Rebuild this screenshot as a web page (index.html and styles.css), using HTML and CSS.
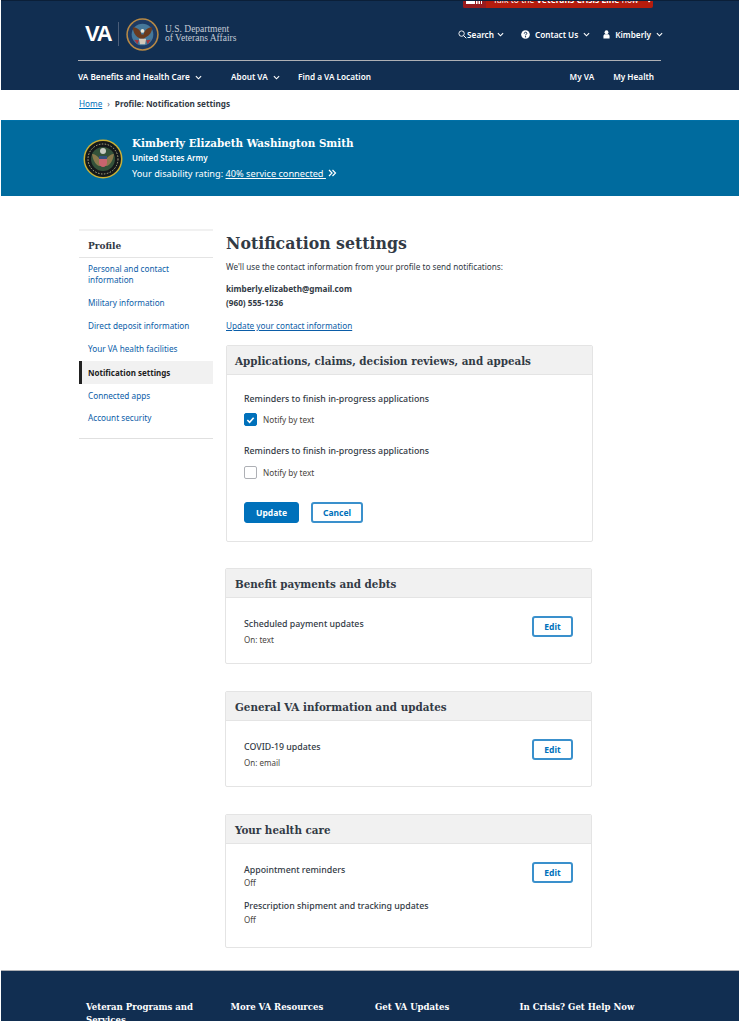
FILE: index.html
```html
<!DOCTYPE html>
<html lang="en">

<head>
    <meta charset="UTF-8">
    <meta name="viewport" content="width=device-width, initial-scale=1.0">
    <title>Notification settings</title>
    <link rel="stylesheet" href="styles.css">
</head>

<body>
    <header class="siteHeader">
        <div class="crisisBar">
            <div class="crisisIcon"><svg viewBox="0 0 16 4"><path d="M0 0h9v3H0zM10 0h1.500v3H10zM12.500 0H14v3h-1.500zM15 0h1v3h-1z" fill="#fff"/></svg></div>
            <div class="crisisText">Talk to the <b>Veterans Crisis Line</b> now
                <svg class="crisisArrow" viewBox="0 0 8 10"><path d="M2 1l4 4-4 4" fill="none" stroke="#fff" stroke-width="2"/></svg>
            </div>
        </div>
        <div class="topRow">
            <div class="logo">
                <span class="logoVa">VA</span>
                <span class="logoSep"></span>
                <svg class="seal" viewBox="0 0 32 32">
                    <circle cx="16" cy="16" r="15.700" fill="#b98a45"/>
                    <circle cx="16" cy="16" r="14.200" fill="#1d3a63"/>
                    <circle cx="16" cy="16" r="10.500" fill="#46789a"/>
                    <path d="M6.500 9c3 0 5.500 1 7.500 4l1 3h2l1-3c2-3 4.500-4 7.500-4-.5 5-2.500 8-6 9.500l-2.500 1.500h-3L11 18.500C9 17 7 14 6.500 9z" fill="#6a3a1e"/>
                    <circle cx="16" cy="12.500" r="1.800" fill="#ece6d6"/>
                    <path d="M12.500 20h7l-1 5.500h-5z" fill="#d3c8ba"/>
                    <path d="M8 21l4.500.5-1.500 4z" fill="#a8353a"/>
                    <path d="M24 21l-4.500.5 1.500 4z" fill="#a8353a"/>
                </svg>
                <span class="logoText">U.S. Department<br>of Veterans Affairs</span>
            </div>
            <nav class="utilNav">
                <a class="utilSearch">
                    <svg class="searchIcon" viewBox="0 0 10 10"><circle cx="4" cy="4" r="3" fill="none" stroke="#fff" stroke-width="1"/><path d="M6.200 6.200L9.200 9.200" stroke="#fff" stroke-width="1.100"/></svg>Search
                    <svg class="chev" viewBox="0 0 8 5"><path d="M1 1l3 3 3-3" fill="none" stroke="#fff" stroke-width="1.300"/></svg>
                </a>
                <a class="utilItem">
                    <svg class="helpIcon" viewBox="0 0 10 10"><circle cx="5" cy="5" r="4.800" fill="#fff"/><path d="M3.600 4c0-2 2.900-2 2.900-.3C6.500 4.800 5 4.700 5 6" fill="none" stroke="#112e51" stroke-width="1.100"/><circle cx="5" cy="7.500" r=".7" fill="#112e51"/></svg>
                    Contact Us
                    <svg class="chev" viewBox="0 0 8 5"><path d="M1 1l3 3 3-3" fill="none" stroke="#fff" stroke-width="1.300"/></svg>
                </a>
                <a class="utilItem">
                    <svg class="userIcon" viewBox="0 0 8 10"><circle cx="4" cy="2.400" r="2.200" fill="#fff"/><path d="M.5 9.500V7c0-1.500 1-2.200 2-2.200h3c1 0 2 .7 2 2.200v2.500z" fill="#fff"/></svg>
                    Kimberly
                    <svg class="chev" viewBox="0 0 8 5"><path d="M1 1l3 3 3-3" fill="none" stroke="#fff" stroke-width="1.300"/></svg>
                </a>
            </nav>
        </div>
        <nav class="mainNav">
            <a class="mainLink navBenefits">VA Benefits and Health Care
                <svg class="chev" viewBox="0 0 8 5"><path d="M1 1l3 3 3-3" fill="none" stroke="#fff" stroke-width="1.300"/></svg></a>
            <a class="mainLink navAbout">About VA
                <svg class="chev" viewBox="0 0 8 5"><path d="M1 1l3 3 3-3" fill="none" stroke="#fff" stroke-width="1.300"/></svg></a>
            <a class="mainLink">Find a VA Location</a>
            <span class="navSpace"></span>
            <a class="mainLink navMyVa">My VA</a>
            <a class="mainLink">My Health</a>
        </nav>
    </header>

    <div class="crumbs">
        <a class="crumbLink">Home</a>
        <span class="crumbSep">›</span>
        <b>Profile: Notification settings</b>
    </div>

    <section class="heroBar">
        <svg class="armySeal" viewBox="0 0 40 40">
            <circle cx="20" cy="20" r="19.500" fill="#c9b037"/>
            <circle cx="20" cy="20" r="18" fill="#14181a"/>
            <circle cx="20" cy="20" r="12" fill="#34523a"/>
            <circle cx="20" cy="20" r="15" fill="none" stroke="#b9b08a" stroke-width="1" stroke-dasharray="1.500 1.500"/>
            <circle cx="20" cy="12" r="3" fill="#c9ccc4"/>
            <path d="M9 15c3 0 5 2 7 4h8c2-2 4-4 7-4-1 6-3 10-7 12h-8c-4-2-6-6-7-12z" fill="#8a7a4d"/>
            <path d="M16 17h8v7c0 2-2 4-4 4s-4-2-4-4z" fill="#c9646e"/>
            <path d="M16 17h8v3h-8z" fill="#35507f"/>
        </svg>
        <div class="heroText">
            <h2 class="heroName">Kimberly Elizabeth Washington Smith</h2>
            <div class="heroBranch">United States Army</div>
            <div class="heroRating">Your disability rating: <a class="heroLink">40% service connected
                <svg class="dblChev" viewBox="0 0 9 8"><path d="M1 1l3 3-3 3M4.500 1l3 3-3 3" fill="none" stroke="#fff" stroke-width="1.200"/></svg></a></div>
        </div>
    </section>

    <main class="pageBody">
        <aside class="sideNav">
            <h4 class="sideTitle">Profile</h4>
            <ul class="sideList">
                <li><a>Personal and contact information</a></li>
                <li><a>Military information</a></li>
                <li><a>Direct deposit information</a></li>
                <li><a>Your VA health facilities</a></li>
                <li class="sideActive"><a>Notification settings</a></li>
                <li><a>Connected apps</a></li>
                <li><a>Account security</a></li>
            </ul>
        </aside>

        <div class="content">
            <h1 class="pageTitle">Notification settings</h1>
            <p class="intro">We'll use the contact information from your profile to send notifications:</p>
            <p class="contactInfo">kimberly.elizabeth@gmail.com<br>(960) 555-1236</p>
            <a class="updateLink">Update your contact information</a>

            <section class="card cardForm">
                <h3 class="cardHead">Applications, claims, decision reviews, and appeals</h3>
                <div class="cardBody">
                    <div class="rowTitle">Reminders to finish in-progress applications</div>
                    <label class="check">
                        <span class="box boxOn"><svg viewBox="0 0 10 8"><path d="M1.500 4l2.500 2.500 4.500-5" fill="none" stroke="#fff" stroke-width="1.800"/></svg></span>
                        Notify by text
                    </label>
                    <div class="rowTitle rowSecond">Reminders to finish in-progress applications</div>
                    <label class="check checkSecond">
                        <span class="box"></span>
                        Notify by text
                    </label>
                    <div class="btnRow">
                        <button class="btn btnMain">Update</button>
                        <button class="btn btnLine">Cancel</button>
                    </div>
                </div>
            </section>

            <section class="card">
                <h3 class="cardHead">Benefit payments and debts</h3>
                <div class="cardBody cardSplit">
                    <div class="rowGroup">
                        <div class="rowTitle">Scheduled payment updates</div>
                        <div class="rowValue">On: text</div>
                    </div>
                    <button class="btn btnLine btnEdit">Edit</button>
                </div>
            </section>

            <section class="card">
                <h3 class="cardHead">General VA information and updates</h3>
                <div class="cardBody cardSplit">
                    <div class="rowGroup">
                        <div class="rowTitle">COVID-19 updates</div>
                        <div class="rowValue">On: email</div>
                    </div>
                    <button class="btn btnLine btnEdit">Edit</button>
                </div>
            </section>

            <section class="card">
                <h3 class="cardHead">Your health care</h3>
                <div class="cardBody cardSplit cardTall">
                    <div class="rowGroup">
                        <div class="rowTitle">Appointment reminders</div>
                        <div class="rowValue rowTight">Off</div>
                        <div class="rowTitle rowNext">Prescription shipment and tracking updates</div>
                        <div class="rowValue rowEnd">Off</div>
                    </div>
                    <button class="btn btnLine btnEdit">Edit</button>
                </div>
            </section>
        </div>
    </main>

    <footer class="siteFooter">
        <h4 class="footCol">Veteran Programs and Services</h4>
        <h4 class="footCol">More VA Resources</h4>
        <h4 class="footCol">Get VA Updates</h4>
        <h4 class="footCol">In Crisis? Get Help Now</h4>
    </footer>
</body>

</html>
```

FILE: styles.css
```css
* {
    box-sizing: border-box;
}

html,
body {
    height: 1021px;
    overflow: hidden;
}

body {
    margin: 0;
    padding: 0 1px;
    background: #fff;
    color: #323a45;
    font-family: "Noto Sans", sans-serif;
    font-size: 8.2px;
}

a {
    color: inherit;
}

.siteHeader {
    position: relative;
    height: 90px;
    padding: 0 78px 0 77px;
    border-top: 1px solid #0b1f38;
    background: #112e51;
    color: #fff;
    font-weight: 600;
}

.crisisBar {
    position: absolute;
    top: 0;
    left: 462px;
    display: flex;
    width: 190px;
    height: 7px;
    overflow: hidden;
    border-radius: 0 0 2px 2px;
    background: #b51c0d;
}

.crisisIcon {
    width: 23px;
    padding: 0 3px;
    background: #981b1e;
}

.crisisIcon svg {
    display: block;
    width: 16px;
    height: 4px;
}

.crisisText {
    margin-top: -7px;
    padding-left: 7px;
    font-size: 8.500px;
    font-weight: 400;
    line-height: 12px;
    white-space: nowrap;
}

.crisisArrow {
    width: 6px;
    height: 8px;
    margin-left: 6px;
}

.topRow {
    display: flex;
    align-items: center;
    justify-content: space-between;
    height: 60px;
    padding: 7px 0 0 7px;
    border-bottom: 1px solid #aeb0b5;
}

.logo {
    display: flex;
    align-items: center;
}

.logoVa {
    width: 31px;
    font-family: "Liberation Sans", sans-serif;
    font-size: 22px;
    font-weight: 700;
    letter-spacing: -1.200px;
}

.logoSep {
    width: 1px;
    height: 24px;
    margin: 0 7px 0 2px;
    background: #4a5d78;
}

.seal {
    width: 33px;
    height: 33px;
    margin-right: 6px;
}

.logoText {
    color: #c5ccd6;
    font-family: "Liberation Serif", serif;
    font-size: 9.500px;
    font-weight: 400;
    line-height: 9px;
}

.utilNav {
    display: flex;
    align-items: center;
    margin-right: -2px;
}

.utilSearch,
.utilItem {
    display: flex;
    align-items: center;
    white-space: nowrap;
}

.utilSearch {
    margin-right: 17px;
}

.utilItem {
    margin-right: 13px;
}

.utilItem:last-child {
    margin-right: 0;
}

.searchIcon {
    width: 9px;
    height: 9px;
}

.helpIcon {
    width: 9px;
    height: 9px;
    margin-right: 5px;
}

.userIcon {
    width: 7px;
    height: 9px;
    margin-right: 5px;
}

.chev {
    width: 7px;
    height: 5px;
    margin-left: 3px;
}

.utilItem .chev {
    margin-left: 5px;
}

.mainNav {
    display: flex;
    align-items: center;
    height: 29px;
    margin-right: 7px;
    padding-top: 1px;
}

.mainLink {
    white-space: nowrap;
}

.navBenefits {
    width: 153px;
}

.navAbout {
    width: 67px;
}

.navSpace {
    flex: 1;
}

.navMyVa {
    margin-right: 19px;
}

.crumbs {
    display: flex;
    align-items: center;
    height: 30px;
    padding: 0 0 3px 78px;
    background: #fff;
}

.crumbLink {
    color: #0071bb;
    text-decoration: underline;
}

.crumbSep {
    margin: 0 5px;
    color: #5b616b;
}

.heroBar {
    display: flex;
    align-items: center;
    height: 76px;
    padding-left: 82px;
    border-top: 1px solid #0071a8;
    background: #006b9e;
    color: #fff;
}

.armySeal {
    width: 40px;
    height: 40px;
    margin-right: 9px;
}

.heroName {
    margin: 0;
    font-family: "DejaVu Serif", serif;
    font-size: 11.500px;
    font-stretch: condensed;
    font-weight: 700;
    line-height: 15px;
}

.heroBranch {
    font-size: 8px;
    font-weight: 600;
    line-height: 13px;
}

.heroRating {
    margin-top: 3px;
    font-size: 9.200px;
    line-height: 14px;
}

.heroLink {
    text-decoration: underline;
}

.dblChev {
    width: 9px;
    height: 8px;
    margin-left: 2px;
}

.pageBody {
    display: flex;
    height: 774px;
    padding: 33px 0 0 78px;
}

.sideNav {
    width: 134px;
    height: 210px;
    margin-right: 13px;
    border-top: 2px solid #f1f1f1;
    border-bottom: 1px solid #e0e0e0;
}

.sideTitle {
    margin: 0;
    height: 27px;
    padding-left: 9px;
    border-bottom: 1px solid #e4e4e4;
    font-family: "DejaVu Serif", serif;
    font-size: 10px;
    font-stretch: condensed;
    font-weight: 700;
    line-height: 30px;
}

.sideList {
    margin: 0;
    padding: 5px 0 0;
    list-style: none;
    color: #0b5da8;
    line-height: 11px;
}

.sideList li {
    padding: 0 9px 12px;
}

.sideList .sideActive {
    margin: -5px 0 6px;
    padding: 6px 9px 6px 6px;
    border-left: 3px solid #212121;
    background: #f1f1f1;
    color: #212121;
    font-size: 8px;
    font-weight: 700;
}

.sideList li:last-child {
    margin-top: -1px;
}

.content {
    width: 367px;
}

.pageTitle {
    margin: 1px 0 0;
    font-family: "DejaVu Serif", serif;
    font-size: 17.500px;
    font-stretch: condensed;
    font-weight: 700;
    line-height: 26px;
}

.intro {
    margin: 4px 0 0;
    line-height: 13px;
}

.contactInfo {
    margin: 9px 0 0;
    font-weight: 700;
    line-height: 14px;
}

.updateLink {
    display: block;
    margin-top: 9px;
    color: #0b5da8;
    line-height: 14px;
    text-decoration: underline;
}

.card {
    width: 367px;
    margin: 0 0 27px -1px;
    overflow: hidden;
    border: 1px solid #e4e4e4;
    border-radius: 2px;
}

.cardForm {
    margin: 12px 0 26px;
}

.cardHead {
    margin: 0;
    height: 29px;
    padding-left: 9px;
    border-bottom: 1px solid #e4e4e4;
    background: #f1f1f1;
    font-family: "DejaVu Serif", serif;
    font-size: 11.500px;
    font-stretch: condensed;
    font-weight: 700;
    line-height: 31px;
}

.cardBody {
    padding: 19px 18px 17px;
}

.cardForm .cardHead {
    padding-left: 8px;
}

.cardForm .cardBody {
    padding: 18px 17px;
}

.cardSplit {
    display: flex;
    align-items: flex-start;
    justify-content: space-between;
}

.cardTall {
    padding-bottom: 21px;
}

.rowGroup {
    padding-top: 1px;
}

.rowTitle {
    font-size: 8.800px;
    font-weight: 500;
    line-height: 13px;
}

.rowSecond {
    margin-top: 19px;
}

.rowValue {
    margin-top: 2px;
    color: #494440;
    font-size: 8px;
    line-height: 13px;
}

.rowTight {
    margin-top: -1px;
}

.rowNext {
    margin-top: 11px;
}

.rowEnd {
    margin-top: 0;
}

.check {
    display: flex;
    align-items: center;
    margin-top: 7px;
    color: #494440;
    gap: 6px;
}

.checkSecond {
    margin-top: 8px;
}

.box {
    display: flex;
    align-items: center;
    justify-content: center;
    width: 13px;
    height: 13px;
    border: 1px solid #aeb0b5;
    border-radius: 2px;
}

.boxOn {
    border-color: #0071bb;
    background: #0071bb;
}

.box svg {
    width: 9px;
    height: 8px;
}

.btnRow {
    display: flex;
    gap: 12px;
    margin-top: 23px;
}

.btn {
    height: 21px;
    padding: 0;
    border: 1px solid #0071bb;
    border-radius: 3px;
    font-family: inherit;
    font-size: 8.500px;
    font-weight: 700;
}

.btnMain {
    width: 55px;
    background: #0071bb;
    color: #fff;
}

.btnLine {
    width: 52px;
    border: 2px solid #3a90cc;
    background: #fff;
    color: #0071bb;
}

.btnEdit {
    width: 41px;
    margin-top: -1px;
}

.siteFooter {
    display: flex;
    height: 51px;
    padding: 29px 0 0 85px;
    border-top: 1px solid #aeb0b5;
    background: #112e51;
    color: #fff;
}

.footCol {
    width: 144.500px;
    margin: 0;
    padding-right: 20px;
    font-family: "DejaVu Serif", serif;
    font-size: 9.500px;
    font-stretch: condensed;
    font-weight: 700;
    line-height: 13px;
}

.footCol:last-child {
    padding-right: 0;
}
```
